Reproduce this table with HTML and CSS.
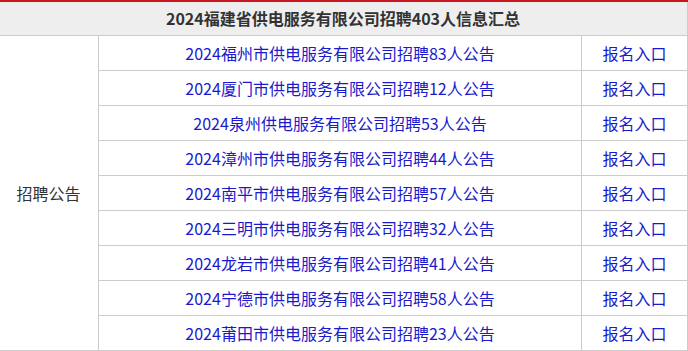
FILE: index.html
```html
<!DOCTYPE html>
<html lang="zh-CN">
<head>
<meta charset="utf-8">
<title>2024福建省供电服务有限公司招聘403人信息汇总</title>
<link rel="stylesheet" href="styles.css">
</head>
<body>
<table class="summary">
  <colgroup>
    <col class="c1">
    <col class="c2">
    <col class="c3">
  </colgroup>
  <thead>
    <tr><th colspan="3">2024福建省供电服务有限公司招聘403人信息汇总</th></tr>
  </thead>
  <tbody>
    <tr><td class="cat" rowspan="9">招聘公告</td><td><a href="#">2024福州市供电服务有限公司招聘83人公告</a></td><td><a href="#">报名入口</a></td></tr>
    <tr><td><a href="#">2024厦门市供电服务有限公司招聘12人公告</a></td><td><a href="#">报名入口</a></td></tr>
    <tr><td><a href="#">2024泉州供电服务有限公司招聘53人公告</a></td><td><a href="#">报名入口</a></td></tr>
    <tr><td><a href="#">2024漳州市供电服务有限公司招聘44人公告</a></td><td><a href="#">报名入口</a></td></tr>
    <tr><td><a href="#">2024南平市供电服务有限公司招聘57人公告</a></td><td><a href="#">报名入口</a></td></tr>
    <tr><td><a href="#">2024三明市供电服务有限公司招聘32人公告</a></td><td><a href="#">报名入口</a></td></tr>
    <tr><td><a href="#">2024龙岩市供电服务有限公司招聘41人公告</a></td><td><a href="#">报名入口</a></td></tr>
    <tr><td><a href="#">2024宁德市供电服务有限公司招聘58人公告</a></td><td><a href="#">报名入口</a></td></tr>
    <tr><td><a href="#">2024莆田市供电服务有限公司招聘23人公告</a></td><td><a href="#">报名入口</a></td></tr>
  </tbody>
</table>
</body>
</html>
```
FILE: styles.css
```css
html, body {
  margin: 0;
  padding: 0;
  background: #fff;
}
body {
  font-family: "Noto Sans CJK SC", "Noto Sans", sans-serif;
  font-size: 16px;
  color: #333;
}
.summary {
  border-collapse: collapse;
  table-layout: fixed;
  width: 689px;
  margin-left: -2px;
  border-top: 2px solid #c8161d;
}
.c1 { width: 100px; }
.c2 { width: 483px; }
.c3 { width: 106px; }
.summary th {
  height: 33px;
  padding: 0;
  background: #eeeeee;
  font-weight: bold;
  font-size: 16px;
  color: #333;
  text-align: center;
  border: 1px solid #cccccc;
  border-top: none;
  line-height: 33px;
}
.summary td {
  height: 34px;
  padding: 0;
  text-align: center;
  border: 1px solid #cccccc;
  line-height: 34px;
  white-space: nowrap;
}
.summary td.cat {
  color: #333;
}
.summary a {
  color: #1a1acc;
  text-decoration: none;
}
```
